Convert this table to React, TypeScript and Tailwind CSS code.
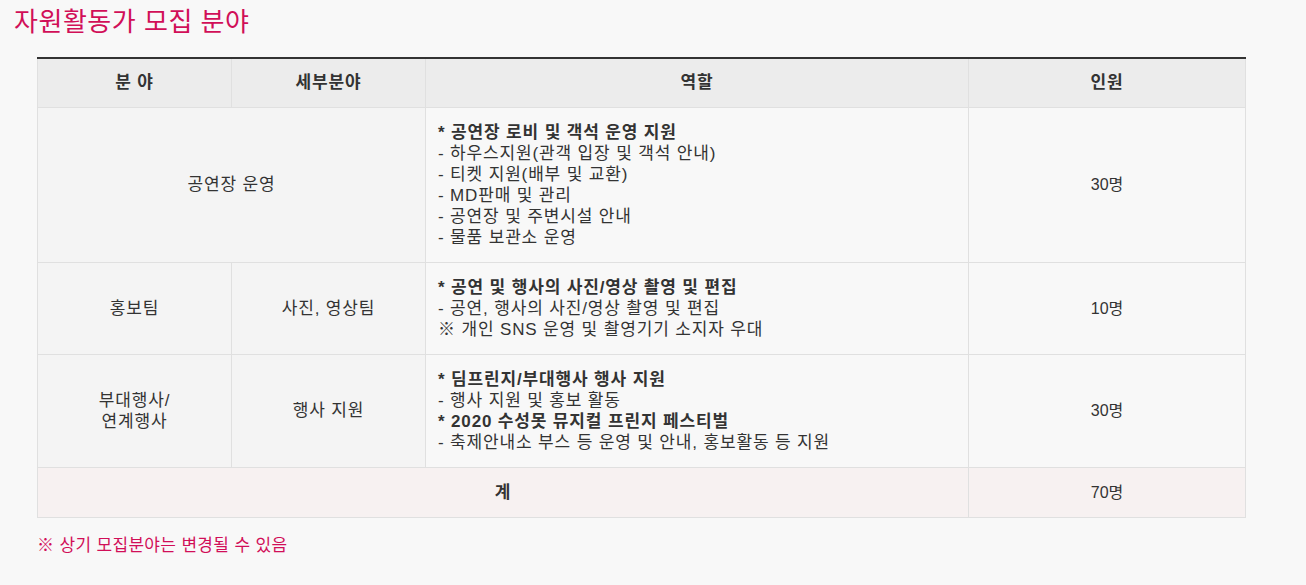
const font = "font-['Liberation_Sans','Noto_Sans_CJK_KR',sans-serif]";

type Row = {
  area?: string;
  areaSpan?: boolean;
  detail?: string;
  role: { bold: boolean; text: string }[];
  count: string;
};

const rows: Row[] = [
  {
    area: "공연장 운영",
    areaSpan: true,
    role: [
      { bold: true, text: "* 공연장 로비 및 객석 운영 지원" },
      { bold: false, text: "- 하우스지원(관객 입장 및 객석 안내)" },
      { bold: false, text: "- 티켓 지원(배부 및 교환)" },
      { bold: false, text: "- MD판매 및 관리" },
      { bold: false, text: "- 공연장 및 주변시설 안내" },
      { bold: false, text: "- 물품 보관소 운영" },
    ],
    count: "30명",
  },
  {
    area: "홍보팀",
    detail: "사진, 영상팀",
    role: [
      { bold: true, text: "* 공연 및 행사의 사진/영상 촬영 및 편집" },
      { bold: false, text: "- 공연, 행사의 사진/영상 촬영 및 편집" },
      { bold: false, text: "※ 개인 SNS 운영 및 촬영기기 소지자 우대" },
    ],
    count: "10명",
  },
  {
    area: "부대행사/\n연계행사",
    detail: "행사 지원",
    role: [
      { bold: true, text: "* 딤프린지/부대행사 행사 지원" },
      { bold: false, text: "- 행사 지원 및 홍보 활동" },
      { bold: true, text: "* 2020 수성못 뮤지컬 프린지 페스티벌" },
      { bold: false, text: "- 축제안내소 부스 등 운영 및 안내, 홍보활동 등 지원" },
    ],
    count: "30명",
  },
];

export default function App() {
  const td = "border border-[#e0e0e0] px-3 py-[14px] align-middle";
  return (
    <div className={`${font} min-h-[585px] w-full bg-[#f8f8f8] text-[#333] text-[17px] leading-[21px] tracking-[0.05em]`}>
      <h2 className="px-[14px] pt-[6px] text-[26px] leading-[32px] font-normal tracking-[0.02em] text-[#d10f58]">
        자원활동가 모집 분야
      </h2>

      <table className="ml-[37px] mt-[19px] w-[1208px] table-fixed border-collapse border-t-2 border-t-[#333]">
        <colgroup>
          <col className="w-[194px]" />
          <col className="w-[194px]" />
          <col className="w-[543px]" />
          <col className="w-[277px]" />
        </colgroup>
        <thead>
          <tr className="h-[49px] bg-[#ececec] font-bold">
            <th className="border border-[#e0e0e0] border-t-[#333] text-center">분 야</th>
            <th className="border border-[#e0e0e0] border-t-[#333] text-center">세부분야</th>
            <th className="border border-[#e0e0e0] border-t-[#333] text-center">역할</th>
            <th className="border border-[#e0e0e0] border-t-[#333] text-center">인원</th>
          </tr>
        </thead>
        <tbody>
          {rows.map((r, i) => (
            <tr key={i}>
              {r.areaSpan ? (
                <td colSpan={2} className={`${td} bg-[#f4f4f4] text-center`}>
                  {r.area}
                </td>
              ) : (
                <>
                  <td className={`${td} bg-[#f4f4f4] text-center whitespace-pre-line`}>{r.area}</td>
                  <td className={`${td} bg-[#f4f4f4] text-center`}>{r.detail}</td>
                </>
              )}
              <td className={`${td} bg-[#f8f8f8] text-left`}>
                {r.role.map((l, j) => (
                  <p key={j} className={l.bold ? "font-bold" : ""}>
                    {l.text}
                  </p>
                ))}
              </td>
              <td className={`${td} bg-[#f8f8f8] text-center text-[16px] tracking-normal`}>{r.count}</td>
            </tr>
          ))}
          <tr className="h-[50px] bg-[#f7f1f1]">
            <td colSpan={3} className="border border-[#e0e0e0] text-center font-bold">
              계
            </td>
            <td className="border border-[#e0e0e0] text-center text-[16px] tracking-normal">70명</td>
          </tr>
        </tbody>
      </table>

      <p className="ml-[37px] mt-[17px] tracking-[0.02em] text-[#d10f58]">※ 상기 모집분야는 변경될 수 있음</p>
    </div>
  );
}
